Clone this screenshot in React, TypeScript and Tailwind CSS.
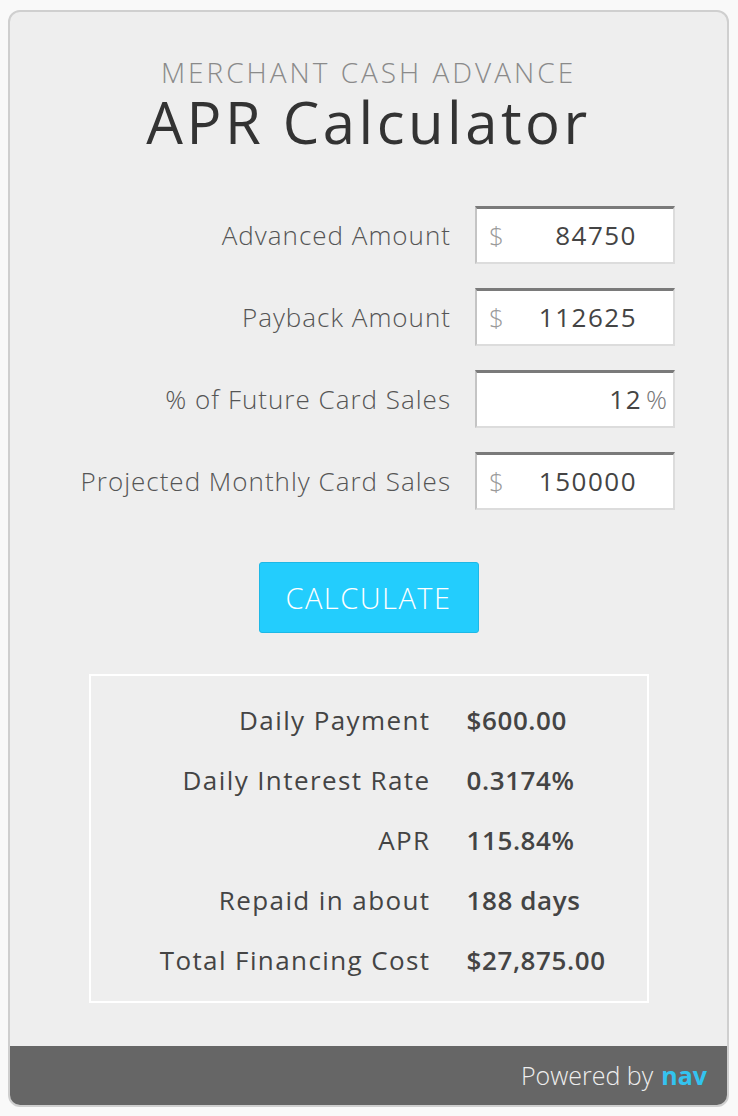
const fields = [
  { label: "Advanced Amount", value: "84750", prefix: true },
  { label: "Payback Amount", value: "112625", prefix: true },
  { label: "% of Future Card Sales", value: "12", prefix: false },
  { label: "Projected Monthly Card Sales", value: "150000", prefix: true },
];

const results = [
  { label: "Daily Payment", value: "$600.00" },
  { label: "Daily Interest Rate", value: "0.3174%" },
  { label: "APR", value: "115.84%" },
  { label: "Repaid in about", value: "188 days" },
  { label: "Total Financing Cost", value: "$27,875.00" },
];

export default function App() {
  return (
    <div className="min-h-[1116px] bg-[#f9f9f9] pt-[10px] pl-[8px] font-['Open_Sans','Lato',sans-serif]">
      <div className="w-[721px] h-[1097px] rounded-[12px] border-2 border-[#cfcfcf] bg-[#eeeeee] flex flex-col overflow-hidden">
        <div className="flex-1 flex flex-col">
          <div className="text-center pt-[42px]">
            <p className="text-[28px] leading-[36px] font-light text-[#8a8a8a] tracking-[3px]">MERCHANT CASH ADVANCE</p>
            <h1 className="text-[58px] leading-[64px] text-[#333333] font-normal tracking-[3.5px]">APR Calculator</h1>
          </div>

          <div className="mt-[52px] grid grid-cols-[1fr_200px] gap-x-[24px] gap-y-[24px] pr-[52px]">
            {fields.map((f) => (
              <div key={f.label} className="contents">
                <div className="flex items-center justify-end text-[26px] font-light text-[#555555] tracking-[1px]">{f.label}</div>
                <div className="h-[58px] bg-white border-t-[3px] border-t-[#7a7a7a] border-l-2 border-l-[#c4c4c4] border-r-2 border-r-[#dcdcdc] border-b-2 border-b-[#dcdcdc] flex items-center pl-[12px] pr-[6px]">
                  {f.prefix && <span className="text-[26px] font-light text-[#9a9a9a]">$</span>}
                  <span className={`flex-1 text-right text-[26px] text-[#444444] font-medium tracking-[1.5px] ${f.prefix ? "pr-[30px]" : "pr-[4px]"}`}>{f.value}</span>
                  {!f.prefix && <span className="text-[26px] font-light text-[#777777]">%</span>}
                </div>
              </div>
            ))}
          </div>

          <div className="flex justify-center mt-[52px]">
            <button className="w-[220px] h-[71px] rounded-[3px] bg-[#23cdfd] border border-[#1db8e6] text-white text-[29px] font-light tracking-[1.5px]">CALCULATE</button>
          </div>

          <div className="mx-auto mt-[41px] w-[560px] border-2 border-white pt-[14px] pb-[11px] grid grid-cols-[340px_1fr] gap-x-[36px] text-[26px] text-[#444444]">
            {results.map((r) => (
              <div key={r.label} className="contents">
                <div className="h-[60px] flex items-center justify-end tracking-[1.4px]">{r.label}</div>
                <div className="h-[60px] flex items-center font-semibold tracking-[0.6px]">{r.value}</div>
              </div>
            ))}
          </div>
        </div>

        <div className="h-[59px] bg-[#666666] flex items-center justify-end pr-[20px] text-[25px]">
          <span className="font-light text-[#eeeeee]">Powered by</span>
          <span className="ml-[8px] font-bold text-[#33c3ef]">nav</span>
        </div>
      </div>
    </div>
  );
}
